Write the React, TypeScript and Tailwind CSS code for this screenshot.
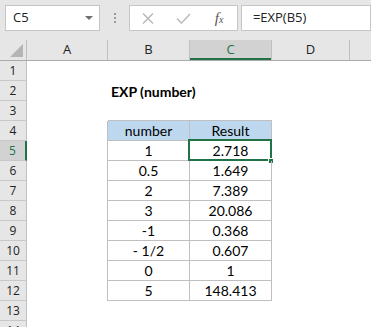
import React from "react";

const cols = [
  { name: "A", w: "w-[81px]" },
  { name: "B", w: "w-[82px]" },
  { name: "C", w: "w-[82px]" },
  { name: "D", w: "w-[78px]" },
];

const data: [string, string][] = [
  ["1", "2.718"],
  ["0.5", "1.649"],
  ["2", "7.389"],
  ["3", "20.086"],
  ["-1", "0.368"],
  ["- 1/2", "0.607"],
  ["0", "1"],
  ["5", "148.413"],
];

const cellFont = { fontFamily: "Lato, 'Open Sans', sans-serif" };
const uiFont = { fontFamily: "'Open Sans', 'Noto Sans', sans-serif" };

function TopBar() {
  return (
    <div className="h-[40px] bg-[#e6e6e6] flex items-start pt-[5px] pl-[5px]" style={uiFont}>
      <div className="w-[102px] h-[26px] bg-white border border-[#c6c6c6] flex items-center pl-[7px] pr-[6px] justify-between">
        <span className="text-[13px] text-[#222]">C5</span>
        <svg width="8" height="5" viewBox="0 0 8 5">
          <path d="M0 0 L8 0 L4 4 Z" fill="#707070" />
        </svg>
      </div>
      <div className="w-[31px] h-[26px] flex flex-col items-center justify-center gap-[2px] pl-[1px]">
        <div className="w-[2px] h-[2px] bg-[#9a9a9a]" />
        <div className="w-[2px] h-[2px] bg-[#9a9a9a]" />
        <div className="w-[2px] h-[2px] bg-[#9a9a9a]" />
      </div>
      <div className="w-[109px] h-[26px] bg-white border border-[#c6c6c6] flex items-center">
        <div className="w-[36px] flex justify-center">
          <svg width="12" height="11" viewBox="0 0 12 11">
            <path d="M1 0.5 L11 10.5 M11 0.5 L1 10.5" stroke="#b5b5b5" strokeWidth="1.4" />
          </svg>
        </div>
        <div className="w-[36px] flex justify-center">
          <svg width="15" height="11" viewBox="0 0 15 11">
            <path d="M1 5.5 L5.5 10 L14 1" stroke="#bdbdbd" strokeWidth="1.6" fill="none" />
          </svg>
        </div>
        <div className="w-[36px] flex justify-center">
          <span
            className="italic text-[15px] text-[#555] leading-none"
            style={{ fontFamily: "'Liberation Serif', serif" }}
          >
            f<span className="text-[10px]">x</span>
          </span>
        </div>
      </div>
      <div className="ml-[3px] w-[140px] h-[26px] bg-white border border-[#c6c6c6] flex items-center pl-[11px]">
        <span className="text-[13px] text-[#222]">=EXP(B5)</span>
      </div>
    </div>
  );
}

function ColumnHeader() {
  return (
    <div className="h-[21px] flex bg-[#e6e6e6] border-b border-[#ababab]" style={uiFont}>
      <div className="w-[27px] shrink-0 border-r border-[#c0c0c0] relative">
        <svg className="absolute right-[3px] bottom-[3px]" width="13" height="13" viewBox="0 0 13 13">
          <path d="M13 0 L13 13 L0 13 Z" fill="#b4b4b4" />
        </svg>
      </div>
      {cols.map((c) => (
        <div
          key={c.name}
          className={`${c.w} shrink-0 flex items-center justify-center text-[13px] border-r border-[#c0c0c0] ${
            c.name === "C"
              ? "bg-[#d2d2d2] text-[#217346] shadow-[inset_0_-2px_0_#217346]"
              : "text-[#222]"
          }`}
        >
          {c.name}
        </div>
      ))}
      <div className="flex-1" />
    </div>
  );
}

function Row({ n }: { n: number }) {
  const inTable = n >= 4 && n <= 12;
  const tableTop = n === 3;
  const item = n >= 5 ? data[n - 5] : null;
  return (
    <div className="h-[20px] flex">
      <div
        className={`w-[27px] shrink-0 flex items-center justify-center text-[12px] border-b border-[#c8c8c8] ${
          n === 5
            ? "bg-[#d2d2d2] text-[#217346] border-r-2 border-r-[#217346]"
            : "bg-[#e6e6e6] text-[#222] border-r border-r-[#c0c0c0]"
        }`}
        style={uiFont}
      >
        {n}
      </div>
      <div className={`w-[81px] shrink-0 ${inTable ? "border-r border-[#bfbfbf]" : ""}`} />
      {n === 2 ? (
        <div className="w-[82px] shrink-0 flex items-center pl-[3px] overflow-visible whitespace-nowrap">
          <span className="text-[14px] font-bold text-black" style={cellFont}>
            EXP (number)
          </span>
        </div>
      ) : (
        <div
          className={`w-[82px] shrink-0 flex items-center justify-center text-[14px] text-black ${
            inTable ? "border-r border-b border-[#bfbfbf]" : tableTop ? "border-b border-[#bfbfbf]" : ""
          } ${n === 4 ? "bg-[#bdd7ee]" : ""}`}
          style={cellFont}
        >
          {n === 4 ? "number" : item ? item[0] : ""}
        </div>
      )}
      <div
        className={`w-[82px] shrink-0 relative flex items-center justify-center text-[14px] text-black ${
          inTable ? "border-r border-b border-[#bfbfbf]" : tableTop ? "border-b border-[#bfbfbf]" : ""
        } ${n === 4 ? "bg-[#bdd7ee]" : ""}`}
        style={cellFont}
      >
        {n === 4 ? "Result" : item ? item[1] : ""}
        {n === 5 && (
          <>
            <div className="absolute left-[-2px] top-[-2px] w-[84px] h-[22px] border-2 border-[#217346]" />
            <div className="absolute right-[-3px] bottom-[-4px] w-[6px] h-[6px] bg-[#217346] border border-white" />
          </>
        )}
      </div>
      <div className="w-[78px] shrink-0" />
      <div className="flex-1" />
    </div>
  );
}

export default function App() {
  const rows = Array.from({ length: 14 }, (_, i) => i + 1);
  return (
    <div className="w-[371px] h-[327px] overflow-hidden bg-white">
      <TopBar />
      <ColumnHeader />
      {rows.map((n) => (
        <Row key={n} n={n} />
      ))}
    </div>
  );
}
